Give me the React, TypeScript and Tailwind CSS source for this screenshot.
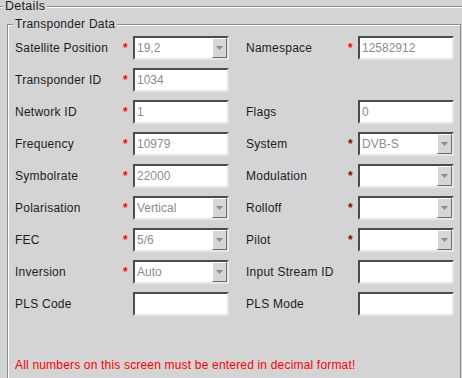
type Cell = {
  label: string;
  star?: 'bright' | 'dark';
  value?: string;
  combo?: boolean;
};

const rows: [Cell, Cell | null][] = [
  [{ label: 'Satellite Position', star: 'bright', value: '19,2', combo: true }, { label: 'Namespace', star: 'bright', value: '12582912' }],
  [{ label: 'Transponder ID', star: 'bright', value: '1034' }, null],
  [{ label: 'Network ID', star: 'bright', value: '1' }, { label: 'Flags', value: '0' }],
  [{ label: 'Frequency', star: 'bright', value: '10979' }, { label: 'System', star: 'dark', value: 'DVB-S', combo: true }],
  [{ label: 'Symbolrate', star: 'bright', value: '22000' }, { label: 'Modulation', star: 'dark', combo: true }],
  [{ label: 'Polarisation', star: 'bright', value: 'Vertical', combo: true }, { label: 'Rolloff', star: 'dark', combo: true }],
  [{ label: 'FEC', star: 'bright', value: '5/6', combo: true }, { label: 'Pilot', star: 'dark', combo: true }],
  [{ label: 'Inversion', star: 'bright', value: 'Auto', combo: true }, { label: 'Input Stream ID' }],
  [{ label: 'PLS Code' }, { label: 'PLS Mode' }],
];

function Input({ value, combo }: { value?: string; combo?: boolean }) {
  return (
    <div className="flex h-6 w-24 items-stretch border-2 border-t-[#4b4b4b] border-l-[#4b4b4b] border-r-[#e6e6e6] border-b-[#e6e6e6] bg-white">
      <div className="flex-1 pl-[2px] text-[12px] leading-5 text-[#8c8c98]">{value}</div>
      {combo && (
        <div className="flex w-[15px] items-center justify-center border border-t-white border-l-white border-r-[#6e6e6e] border-b-[#6e6e6e] bg-[#d6d6d6]">
          <svg width="7" height="4" viewBox="0 0 7 4">
            <path d="M0 0 H7 L3.5 4 Z" fill="#8a8a8a" />
          </svg>
        </div>
      )}
    </div>
  );
}

function Field({ cell, labelW }: { cell: Cell | null; labelW: string }) {
  if (!cell) return <div className="w-[208px]" />;
  return (
    <div className="flex items-center">
      <div className={`${labelW} text-[12px] leading-4 tracking-[0.25px] text-[#1c1c1c]`}>{cell.label}</div>
      <div className="w-3 pl-[2px] text-[12px] font-bold leading-4">
        {cell.star === 'bright' && <span className="text-[#ff0000]">*</span>}
        {cell.star === 'dark' && <span className="text-[#8b0a0a]">*</span>}
      </div>
      <Input value={cell.value} combo={cell.combo} />
    </div>
  );
}

export default function App() {
  return (
    <div
      className="h-[378px] w-[462px] overflow-hidden bg-[#d4d4d4]"
      style={{ fontFamily: '"Liberation Sans", Arial, sans-serif' }}
    >
      <div className="relative ml-[-2px] mt-[6px] h-[400px] w-[480px] border-t border-l border-[#8c8c8c] shadow-[inset_1px_1px_0_#ffffff]">
        <div className="absolute left-[4px] top-[-8px] bg-[#d4d4d4] px-[2px] text-[12.5px] leading-[14px] tracking-[0.3px] text-[#1c1c1c]">
          Details
        </div>
        <div className="relative ml-[8px] mt-[17px] h-[380px] w-[454px] border border-[#8c8c8c] shadow-[inset_1px_1px_0_#ffffff]">
          <div className="absolute left-[5px] top-[-8px] bg-[#d4d4d4] px-[2px] text-[12px] leading-[14px] tracking-[0.25px] text-[#1c1c1c]">
            Transponder Data
          </div>
          <div className="flex flex-col gap-2 pl-[7px] pt-[11px]">
            {rows.map(([l, r], i) => (
              <div key={i} className="flex items-center gap-[17px]">
                <Field cell={l} labelW="w-[106px]" />
                <Field cell={r} labelW="w-[100px]" />
              </div>
            ))}
          </div>
          <div className="pl-[7px] pt-[42px] text-[12px] leading-[14px] tracking-[0.18px] text-[#ff0000]">
            All numbers on this screen must be entered in decimal format!
          </div>
        </div>
      </div>
    </div>
  );
}
